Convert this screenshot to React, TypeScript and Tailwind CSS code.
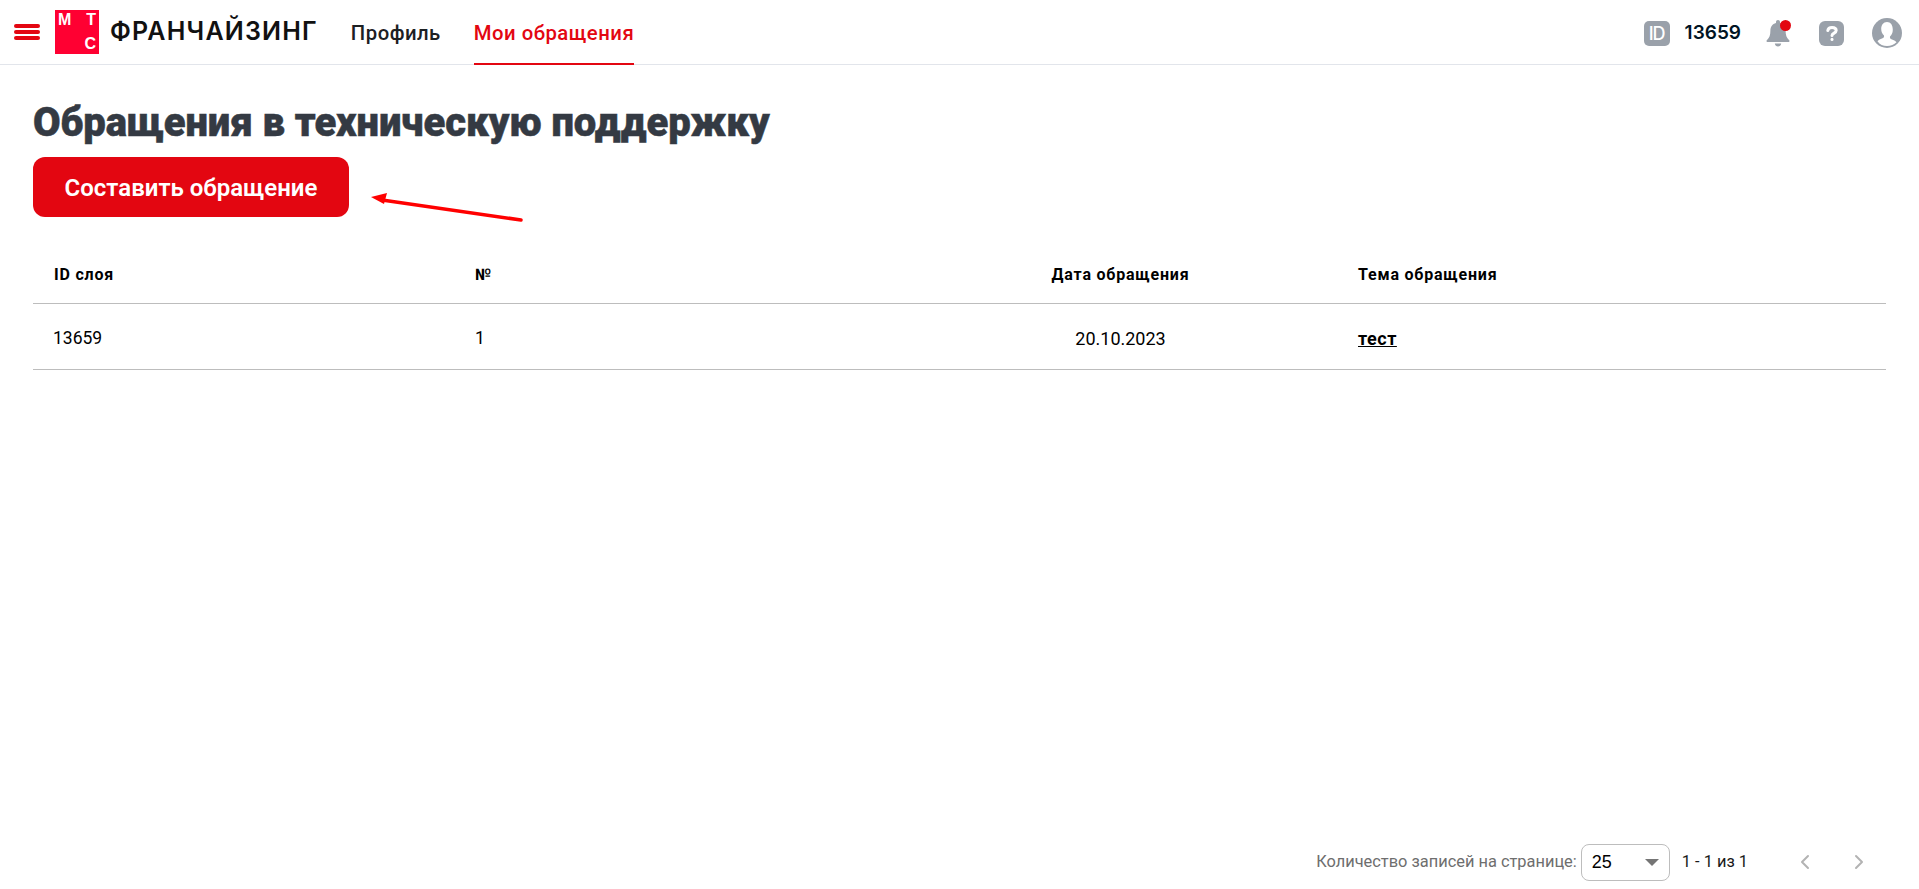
import { ChevronLeft, ChevronRight } from "lucide-react";

const IdIcon = () => (
  <div className="flex h-[25px] w-[26px] items-center justify-center rounded-[5px] bg-[#9aa1aa] font-['Inter',sans-serif] text-[18px] font-medium tracking-[-1px] text-white">
    ID
  </div>
);

const BellIcon = () => (
  <div className="relative h-7 w-6">
    <svg viewBox="0 0 24 28" className="h-7 w-6" fill="#9aa1aa">
      <path d="M12 1c1.2 0 2 .9 2 2v1c3.6.9 5.6 4 5.6 7.6 0 4.6.9 7.2 3.6 9.6.6.6.2 1.8-.7 1.8H1.5c-.9 0-1.3-1.2-.7-1.8 2.7-2.4 3.6-5 3.6-9.6C4.4 8 6.4 4.9 10 4V3c0-1.100.8-2 2-2z" />
      <path d="M8.800 24.500h6.400c-.2 1.700-1.600 3-3.200 3s-3-1.300-3.200-3z" />
    </svg>
    <span className="absolute right-[-1px] top-[1px] h-[11px] w-[11px] rounded-full bg-[#e30611]" />
  </div>
);

const HelpIcon = () => (
  <div className="flex h-[25px] w-[25px] items-center justify-center rounded-[6px] bg-[#9aa1aa]">
    <svg viewBox="0 0 24 24" className="h-6 w-6" fill="none" stroke="white" strokeWidth="3" strokeLinecap="round">
      <path d="M7.800 9.500c.3-2 2-3 4.200-3 2.400 0 4.200 1.200 4.200 3.100 0 2.600-4.200 2.400-4.200 4.900" />
      <path d="M12 18.300v.1" />
    </svg>
  </div>
);

const UserIcon = () => (
  <svg viewBox="0 0 30 30" className="h-[30px] w-[30px]">
    <circle cx="15" cy="15" r="15" fill="#9aa1aa" />
    <path
      d="M15 4c-3.700 0-5.800 3-5.800 6.800 0 3 1.200 5.400 2.800 6.700.4 1.500-.5 2.500-2 3.100-1.700.7-3.200 1.300-4.500 2.600C7.800 26.500 11.200 28 15 28s7.200-1.500 9.500-3.800c-1.300-1.300-2.800-1.900-4.500-2.600-1.500-.6-2.400-1.600-2-3.100 1.600-1.300 2.800-3.700 2.800-6.700C20.800 7 18.700 4 15 4z"
      fill="white"
    />
  </svg>
);

export default function App() {
  return (
    <div className="flex h-screen flex-col bg-white font-['Roboto',sans-serif] text-black">
      {/* шапка */}
      <header className="flex h-[65px] shrink-0 items-center border-b border-[#e2e5eb] pl-[14px] pr-[17px]">
        <div className="flex w-[26px] flex-col gap-[2px]">
          <span className="h-[4px] rounded-full bg-[#e30611]" />
          <span className="h-[4px] rounded-full bg-[#e30611]" />
          <span className="h-[4px] rounded-full bg-[#e30611]" />
        </div>
        <div className="ml-[15px] flex h-[44px] w-[44px] flex-col justify-between bg-[#ff0032] px-[2px] font-['Liberation_Sans',sans-serif] text-[16px] font-bold leading-[20px] text-white">
          <div className="flex justify-between px-[1px]">
            <span>М</span>
            <span>Т</span>
          </div>
          <div className="flex justify-end px-[1px]">С</div>
        </div>
        <div className="ml-[11px] font-['Inter',sans-serif] text-[25px] font-semibold tracking-[1.200px] text-[#111]">
          ФРАНЧАЙЗИНГ
        </div>
        <nav className="ml-[33px] flex h-full gap-[33px] text-[20.300px] font-medium">
          <a className="flex items-center pt-[3px] tracking-[0.5px] text-[#1d2023]">Профиль</a>
          <a className="mb-[-1px] flex items-center border-b-2 border-[#e30611] pt-[3px] tracking-[0.5px] text-[#e30611]">
            Мои обращения
          </a>
        </nav>
        <div className="ml-auto flex items-center pt-[2px]">
          <IdIcon />
          <span className="ml-[15px] font-['Inter',sans-serif] text-[19px] font-semibold text-[#001424]">13659</span>
          <div className="ml-[25px]">
            <BellIcon />
          </div>
          <div className="ml-[29px]">
            <HelpIcon />
          </div>
          <div className="ml-[28px]">
            <UserIcon />
          </div>
        </div>
      </header>

      <main className="flex min-h-0 flex-1 flex-col px-[33px]">
        <h1 className="mt-[33px] font-['Roboto',sans-serif] text-[40px] font-black leading-[50px] tracking-[-0.1px] text-[#343a43] [-webkit-text-stroke:0.5px_#343a43]">
          Обращения в техническую поддержку
        </h1>
        <div className="relative mt-[9px] w-fit">
          <button className="h-[60px] w-[316px] rounded-[12px] bg-[#e30611] pt-[2px] text-[24px] font-semibold text-white">
            Составить обращение
          </button>
          <svg className="absolute left-[335px] top-[36px]" width="160" height="32" viewBox="0 0 160 32">
            <path d="M153 27 L14 7" stroke="#f00" strokeWidth="3.500" strokeLinecap="round" />
            <path d="M3 4 L19 0 L16 11 Z" fill="#f00" />
          </svg>
        </div>

        <table className="mt-[32px] w-full table-fixed text-left text-[17.500px]">
          <thead>
            <tr className="h-[54px] border-b border-[#bdbdbd] text-[16px] font-bold tracking-[0.8px]">
              <th className="w-[442px] pb-[2px] pl-[21px] font-bold">ID слоя</th>
              <th className="w-[408px] pb-[2px] font-bold">№</th>
              <th className="w-[475px] pb-[2px] text-center font-bold">Дата обращения</th>
              <th className="pb-[2px] font-bold">Тема обращения</th>
            </tr>
          </thead>
          <tbody>
            <tr className="h-[66px] border-b border-[#bdbdbd]">
              <td className="pl-[20px] pt-[4px]">13659</td>
              <td className="pt-[4px]">1</td>
              <td className="pt-[4px] text-center text-[18px]">20.10.2023</td>
              <td className="pt-[4px] text-[18px] font-bold tracking-[0.5px] underline">тест</td>
            </tr>
          </tbody>
        </table>

        {/* пагинация */}
        <div className="mt-auto flex h-[54px] items-center justify-end text-[16.400px]">
          <span className="text-[#6e6e6e]">Количество записей на странице:</span>
          <div className="ml-[4px] flex h-[37px] w-[89px] items-center justify-between rounded-[8px] border border-[#bdbdbd] pl-[10px] pr-[10px]">
            <span className="font-['Liberation_Sans',sans-serif] text-[18px]">25</span>
            <span className="h-0 w-0 border-x-[7px] border-t-[7px] border-x-transparent border-t-[#757575]" />
          </div>
          <span className="ml-[12px] text-[#1a1a1a]">1 - 1 из 1</span>
          <ChevronLeft className="ml-[45px] h-[24px] w-[24px] text-[#b3b3b3]" strokeWidth={2} />
          <ChevronRight className="ml-[30px] mr-[15px] h-[24px] w-[24px] text-[#b3b3b3]" strokeWidth={2} />
        </div>
      </main>
    </div>
  );
}
